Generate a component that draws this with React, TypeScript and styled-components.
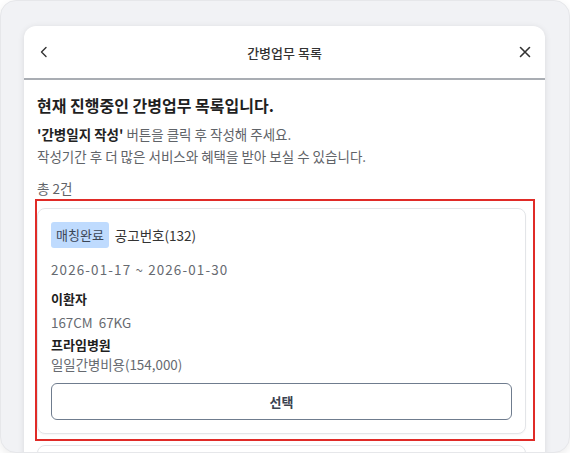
import styled, { createGlobalStyle } from 'styled-components'

const GlobalStyle = createGlobalStyle`
  html, body {
    margin: 0;
    padding: 0;
    background: #ffffff;
  }
  body {
    font-family: 'Noto Sans CJK KR', 'Noto Sans', sans-serif;
    color: #222;
  }
  * {
    box-sizing: border-box;
  }
`

const Frame = styled.div`
  height: 453px;
  background: #f1f2f5;
  border-radius: 16px;
  overflow: hidden;
  border: 1px solid #e6e7ea;
  box-shadow: 0 3px 8px rgba(0, 0, 0, 0.08);
  padding: 25px 24px 0 23px;
`

const Modal = styled.div`
  background: #fff;
  border-radius: 12px 12px 0 0;
  box-shadow: 0 1px 6px rgba(0, 0, 0, 0.1);
  min-height: 600px;
`

const Header = styled.div`
  height: 54px;
  display: flex;
  align-items: center;
  justify-content: space-between;
  padding: 0 12px 0 12px;
  border-bottom: 2px solid #a9adb3;
`

const IconButton = styled.button`
  width: 16px;
  height: 16px;
  padding: 0;
  border: 0;
  background: none;
  display: flex;
  align-items: center;
  justify-content: center;
  color: #333;
`

const Title = styled.h1`
  margin: 0;
  font-size: 13px;
  font-weight: 500;
  color: #333;
`

const Content = styled.div`
  padding: 12px 19px 0 13px;
`

const Heading = styled.h2`
  margin: 0;
  font-size: 16px;
  line-height: 26px;
  font-weight: 700;
  color: #1f1f1f;
`

const Desc = styled.p`
  margin: 0;
  font-size: 13.5px;
  line-height: 22px;
  color: #5f6368;
  &:first-of-type {
    margin-top: 5px;
  }
  strong {
    color: #222;
    font-weight: 700;
  }
`

const Count = styled.div`
  margin-top: 10px;
  font-size: 13.5px;
  line-height: 22px;
  color: #5f6368;
`

const CardList = styled.div`
  position: relative;
  margin-top: 9px;
  display: flex;
  flex-direction: column;
  gap: 11px;
`

const Highlight = styled.div`
  position: absolute;
  left: -2px;
  top: -9px;
  width: 500px;
  height: 242px;
  border: 2px solid #e02b27;
  pointer-events: none;
`

const Card = styled.div`
  border: 1px solid #e3e5e8;
  border-radius: 8px;
  padding: 13px 13px 13px 13px;
  background: #fff;
  box-shadow: 0 1px 2px rgba(0, 0, 0, 0.04);
  min-height: 40px;
`

const TopRow = styled.div`
  display: flex;
  align-items: center;
  gap: 6px;
  height: 26px;
`

const Badge = styled.span`
  background: #bfdbfe;
  color: #3b4656;
  font-size: 13px;
  line-height: 26px;
  padding: 0 5px;
  border-radius: 3px;
`

const Notice = styled.span`
  font-size: 13.5px;
  color: #333;
`

const Line = styled.div<{ $bold?: boolean; $gap?: number; $wide?: boolean }>`
  margin-top: ${(p) => p.$gap ?? 0}px;
  font-size: ${(p) => (p.$bold ? 13 : 13.4)}px;
  line-height: 20px;
  letter-spacing: ${(p) => (p.$wide ? '1.15px' : 'normal')};
  font-weight: ${(p) => (p.$bold ? 700 : 400)};
  color: ${(p) => (p.$bold ? '#1f1f1f' : '#666a70')};
  white-space: pre;
`

const SelectButton = styled.button`
  margin-top: 9px;
  width: 100%;
  height: 37px;
  border: 1px solid #6f7c8e;
  border-radius: 6px;
  background: #fff;
  font-family: inherit;
  font-size: 13px;
  font-weight: 700;
  color: #3a4250;
  cursor: pointer;
`

export default function App() {
  return (
    <>
      <GlobalStyle />
      <Frame>
        <Modal>
          <Header>
            <IconButton aria-label="뒤로">
              <svg width="12" height="12" viewBox="0 0 12 12" fill="none">
                <path d="M8 1.5L3.5 6L8 10.5" stroke="#333" strokeWidth="1.4" strokeLinecap="round" strokeLinejoin="round" />
              </svg>
            </IconButton>
            <Title>간병업무 목록</Title>
            <IconButton aria-label="닫기">
              <svg width="12" height="12" viewBox="0 0 12 12" fill="none">
                <path d="M1.5 1.5L10.5 10.5M10.5 1.5L1.5 10.5" stroke="#333" strokeWidth="1.6" strokeLinecap="round" />
              </svg>
            </IconButton>
          </Header>
          <Content>
            <Heading>현재 진행중인 간병업무 목록입니다.</Heading>
            <Desc>
              <strong>'간병일지 작성'</strong> 버튼을 클릭 후 작성해 주세요.
            </Desc>
            <Desc>작성기간 후 더 많은 서비스와 혜택을 받아 보실 수 있습니다.</Desc>
            <Count>총 2건</Count>
            <CardList>
              <Highlight />
              <Card>
                <TopRow>
                  <Badge>매칭완료</Badge>
                  <Notice>공고번호(132)</Notice>
                </TopRow>
                <Line $wide $gap={11}>2026-01-17 ~ 2026-01-30</Line>
                <Line $bold $gap={10}>이환자</Line>
                <Line $gap={3}>167CM  67KG</Line>
                <Line $bold $gap={3}>프라임병원</Line>
                <Line $gap={-1}>일일간병비용(154,000)</Line>
                <SelectButton>선택</SelectButton>
              </Card>
              <Card />
            </CardList>
          </Content>
        </Modal>
      </Frame>
    </>
  )
}
